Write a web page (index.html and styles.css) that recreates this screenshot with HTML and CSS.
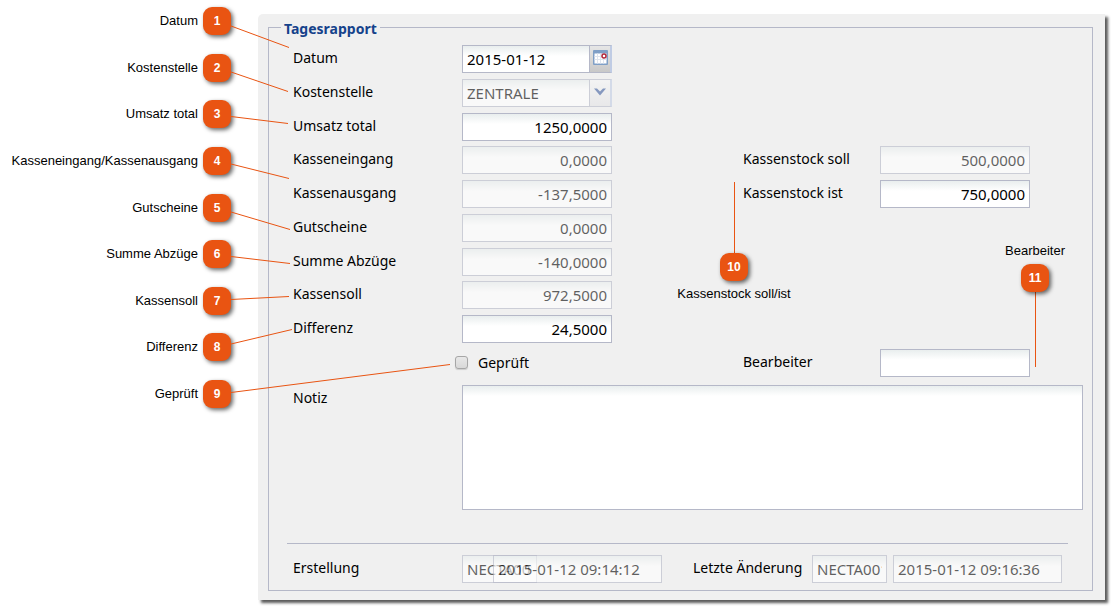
FILE: index.html
```html
<!DOCTYPE html>
<html lang="de">
<head>
<meta charset="utf-8">
<title>Tagesrapport</title>
<link rel="stylesheet" href="styles.css">
</head>
<body>
<main class="page">
  <ol class="callouts">
    <li class="callout">Datum <span class="badge">1</span></li>
    <li class="callout">Kostenstelle <span class="badge">2</span></li>
    <li class="callout">Umsatz total <span class="badge">3</span></li>
    <li class="callout">Kasseneingang/Kassenausgang <span class="badge">4</span></li>
    <li class="callout">Gutscheine <span class="badge">5</span></li>
    <li class="callout">Summe Abzüge <span class="badge">6</span></li>
    <li class="callout">Kassensoll <span class="badge">7</span></li>
    <li class="callout">Differenz <span class="badge">8</span></li>
    <li class="callout">Geprüft <span class="badge">9</span></li>
  </ol>

  <form class="panel">
    <fieldset class="report">
      <legend class="report-title">Tagesrapport</legend>

      <div class="fields">
        <label class="label" for="datum">Datum</label>
        <div class="combo">
          <input class="field combo-input" id="datum" type="text" value="2015-01-12">
          <button class="trigger trigger-date" type="button" aria-label="Kalender">
            <svg width="17" height="18" viewBox="0 0 17 18" aria-hidden="true">
              <rect x="1" y="1" width="15" height="15" rx="1" fill="#7f9fc6"/>
              <rect x="2.500" y="4.500" width="12" height="10" fill="#fff"/>
              <path d="M2.500 7.500h12M2.500 10.500h12M5.500 4.500v10M8.500 4.500v10M11.500 4.500v10" stroke="#dfe5ee" fill="none"/>
              <circle cx="12" cy="7" r="2" fill="#fff" stroke="#b3283a" stroke-width="1.500"/>
            </svg>
          </button>
        </div>

        <label class="label" for="kostenstelle">Kostenstelle</label>
        <div class="combo combo-disabled">
          <select class="field combo-input" id="kostenstelle" disabled>
            <option>ZENTRALE</option>
          </select>
          <span class="trigger">
            <svg width="12" height="8" viewBox="0 0 12 8" aria-hidden="true">
              <path d="M0 0.500h3l3 3 3-3h3L6 7.500z" fill="#3f5f9f"/>
            </svg>
          </span>
        </div>

        <label class="label" for="umsatz">Umsatz total</label>
        <input class="field number" id="umsatz" type="text" value="1250,0000">

        <label class="label" for="eingang">Kasseneingang</label>
        <input class="field number" id="eingang" type="text" value="0,0000" disabled>
        <label class="label second" for="stock-soll">Kassenstock soll</label>
        <input class="field number" id="stock-soll" type="text" value="500,0000" disabled>

        <label class="label" for="ausgang">Kassenausgang</label>
        <input class="field number" id="ausgang" type="text" value="-137,5000" disabled>
        <label class="label second" for="stock-ist">Kassenstock ist</label>
        <input class="field number" id="stock-ist" type="text" value="750,0000">

        <label class="label" for="gutscheine">Gutscheine</label>
        <input class="field number" id="gutscheine" type="text" value="0,0000" disabled>

        <label class="label" for="abzuege">Summe Abzüge</label>
        <input class="field number" id="abzuege" type="text" value="-140,0000" disabled>

        <label class="label" for="kassensoll">Kassensoll</label>
        <input class="field number" id="kassensoll" type="text" value="972,5000" disabled>

        <label class="label" for="differenz">Differenz</label>
        <input class="field number" id="differenz" type="text" value="24,5000">

        <div class="check">
          <input class="checkbox" id="geprueft" type="checkbox">
          <label for="geprueft">Geprüft</label>
        </div>
        <label class="label second" for="bearbeiter">Bearbeiter</label>
        <input class="field" id="bearbeiter" type="text">
      </div>

      <div class="note">
        <label class="label note-label" for="notiz">Notiz</label>
        <textarea class="field note-text" id="notiz"></textarea>
      </div>

      <hr class="divider">

      <div class="audit">
        <label class="label audit-label" for="erstellung">Erstellung</label>
        <input class="field user" id="erstellung" type="text" value="NECTA001" disabled>
        <input class="field stamp stamp-created" type="text" value="2015-01-12 09:14:12" aria-label="Erstellt am" disabled>
        <label class="label audit-changed" for="aenderung">Letzte Änderung</label>
        <input class="field user" id="aenderung" type="text" value="NECTA001" disabled>
        <input class="field stamp stamp-changed" type="text" value="2015-01-12 09:16:36" aria-label="Geändert am" disabled>
      </div>
    </fieldset>
  </form>

  <svg class="leaders" width="1050" height="400" viewBox="0 0 1050 400" aria-hidden="true">
    <path d="M231 26L289 47.500M231 72L288 91.500M231 116.500L288 123.500M231 164L289 178.500M231 212L290 229.500M231 256.500L290 263.500M231 299.500L289 296.500M231 344L292 329.500M231 392.500L450 364.500M734.500 182V254M1035.500 291V367"/>
  </svg>
  <div class="pin pin-stock"><span class="badge">10</span><span>Kassenstock soll/ist</span></div>
  <div class="pin pin-editor"><span>Bearbeiter</span><span class="badge">11</span></div>
</main>
</body>
</html>
```
FILE: styles.css
```css
* {
  box-sizing: border-box;
}

body {
  margin: 0;
  background: #fff;
  color: #000;
  font: 14px/26px "Noto Sans", sans-serif;
}

.page {
  position: relative;
  display: flex;
  align-items: flex-start;
  padding: 7px 9px 8px 0;
}

/* Numbered callouts */
.callouts {
  display: flex;
  flex: 0 0 258px;
  flex-direction: column;
  justify-content: space-between;
  min-height: 401px;
  margin: 0;
  padding: 0 27px 0 0;
  list-style: none;
  font: 13px/28px "Liberation Sans", Arial, sans-serif;
}

.callout {
  display: flex;
  justify-content: flex-end;
  gap: 5px;
  white-space: nowrap;
}

.badge {
  width: 28px;
  height: 28px;
  border-radius: 9px;
  background: #e95412;
  box-shadow: 2px 2px 4px rgba(0, 0, 0, 0.6);
  color: #fff;
  font: bold 12px/28px "Liberation Sans", Arial, sans-serif;
  text-align: center;
}

.leaders {
  position: absolute;
  top: 0;
  left: 0;
  fill: none;
  stroke: #e95412;
  stroke-width: 1;
  pointer-events: none;
}

.pin {
  position: absolute;
  display: flex;
  flex-direction: column;
  align-items: center;
  width: 140px;
  font: 13px/26px "Liberation Sans", Arial, sans-serif;
  white-space: nowrap;
}

.pin-stock {
  top: 253px;
  left: 664px;
}

.pin-editor {
  top: 238px;
  left: 965px;
}

/* Form panel */
.panel {
  flex: 1;
  min-width: 0;
  margin-top: 7px;
  padding: 2px 12px 9px 10px;
  border-radius: 5px 0 0 0;
  background: #f0f0f0;
  box-shadow: 3px 3px 3px rgba(0, 0, 0, 0.65);
}

.report {
  min-width: 0;
  margin: 0;
  padding: 7px 9px 7px 18px;
  border: 1px solid #b5b8c8;
}

.report-title {
  margin-left: -6px;
  padding: 4px 3px 0;
  color: #15428b;
  font-weight: bold;
  line-height: 18px;
}

.fields {
  display: grid;
  grid-template-columns: 169px 150px 131px 137px 150px;
  align-content: space-between;
  min-height: 332px;
  padding-left: 6px;
}

.label {
  grid-column: 1;
  white-space: nowrap;
}

.second {
  grid-column: 4;
}

.field {
  width: 100%;
  height: 28px;
  margin: 0;
  padding: 0 4px;
  border: 1px solid #b5b8c8;
  border-radius: 0;
  outline: 0;
  background: #fff linear-gradient(#e9eeee, #fff 10px) no-repeat;
  color: #000;
  font: 15px/26px "Noto Sans", sans-serif;
}

.field:disabled {
  opacity: 0.6;
}

.number {
  text-align: right;
}

.combo {
  display: flex;
}

.combo-disabled {
  opacity: 0.6;
}

.combo-disabled .field {
  opacity: 1;
}

.combo-input {
  flex: 1;
  min-width: 0;
  border-right: 0;
  appearance: none;
}

.trigger {
  display: flex;
  align-items: center;
  justify-content: center;
  width: 23px;
  height: 28px;
  padding: 0 0 2px;
  border: 1px solid #b5b8c8;
  border-right: 2px solid #c0cce4;
  border-radius: 0;
  background: linear-gradient(#f6f6f6, #e4e4e6);
}

.trigger-date {
  background: linear-gradient(#e6e6e6, #c8c8c8);
}

.check {
  display: flex;
  grid-column: 2;
  align-items: center;
  gap: 10px;
  margin-left: -7px;
}

.checkbox {
  width: 13px;
  height: 13px;
  margin: 0;
  border: 1px solid #a6a6a6;
  border-radius: 3px;
  background: linear-gradient(#e8e8e8, #d8d8d8);
  box-shadow: 0 1px 1px rgba(0, 0, 0, 0.15);
  appearance: none;
}

.note {
  display: flex;
  margin-top: 8px;
  padding-left: 6px;
}

.note-label {
  flex: 0 0 169px;
}

.note-text {
  flex: 1;
  min-width: 0;
  height: 125px;
  resize: none;
}

.divider {
  height: 1px;
  margin: 33px 15px 11px 0;
  border: 0;
  background: #b5b8c8;
}

.audit {
  display: flex;
  padding-left: 6px;
}

.audit-label {
  flex: 0 0 169px;
}

.audit-changed {
  flex: 0 0 119px;
  margin-left: 31px;
}

.user {
  width: 75px;
}

.stamp {
  width: 169px;
}

.stamp-created {
  margin-left: -44px;
}

.stamp-changed {
  margin-left: 6px;
}
```
